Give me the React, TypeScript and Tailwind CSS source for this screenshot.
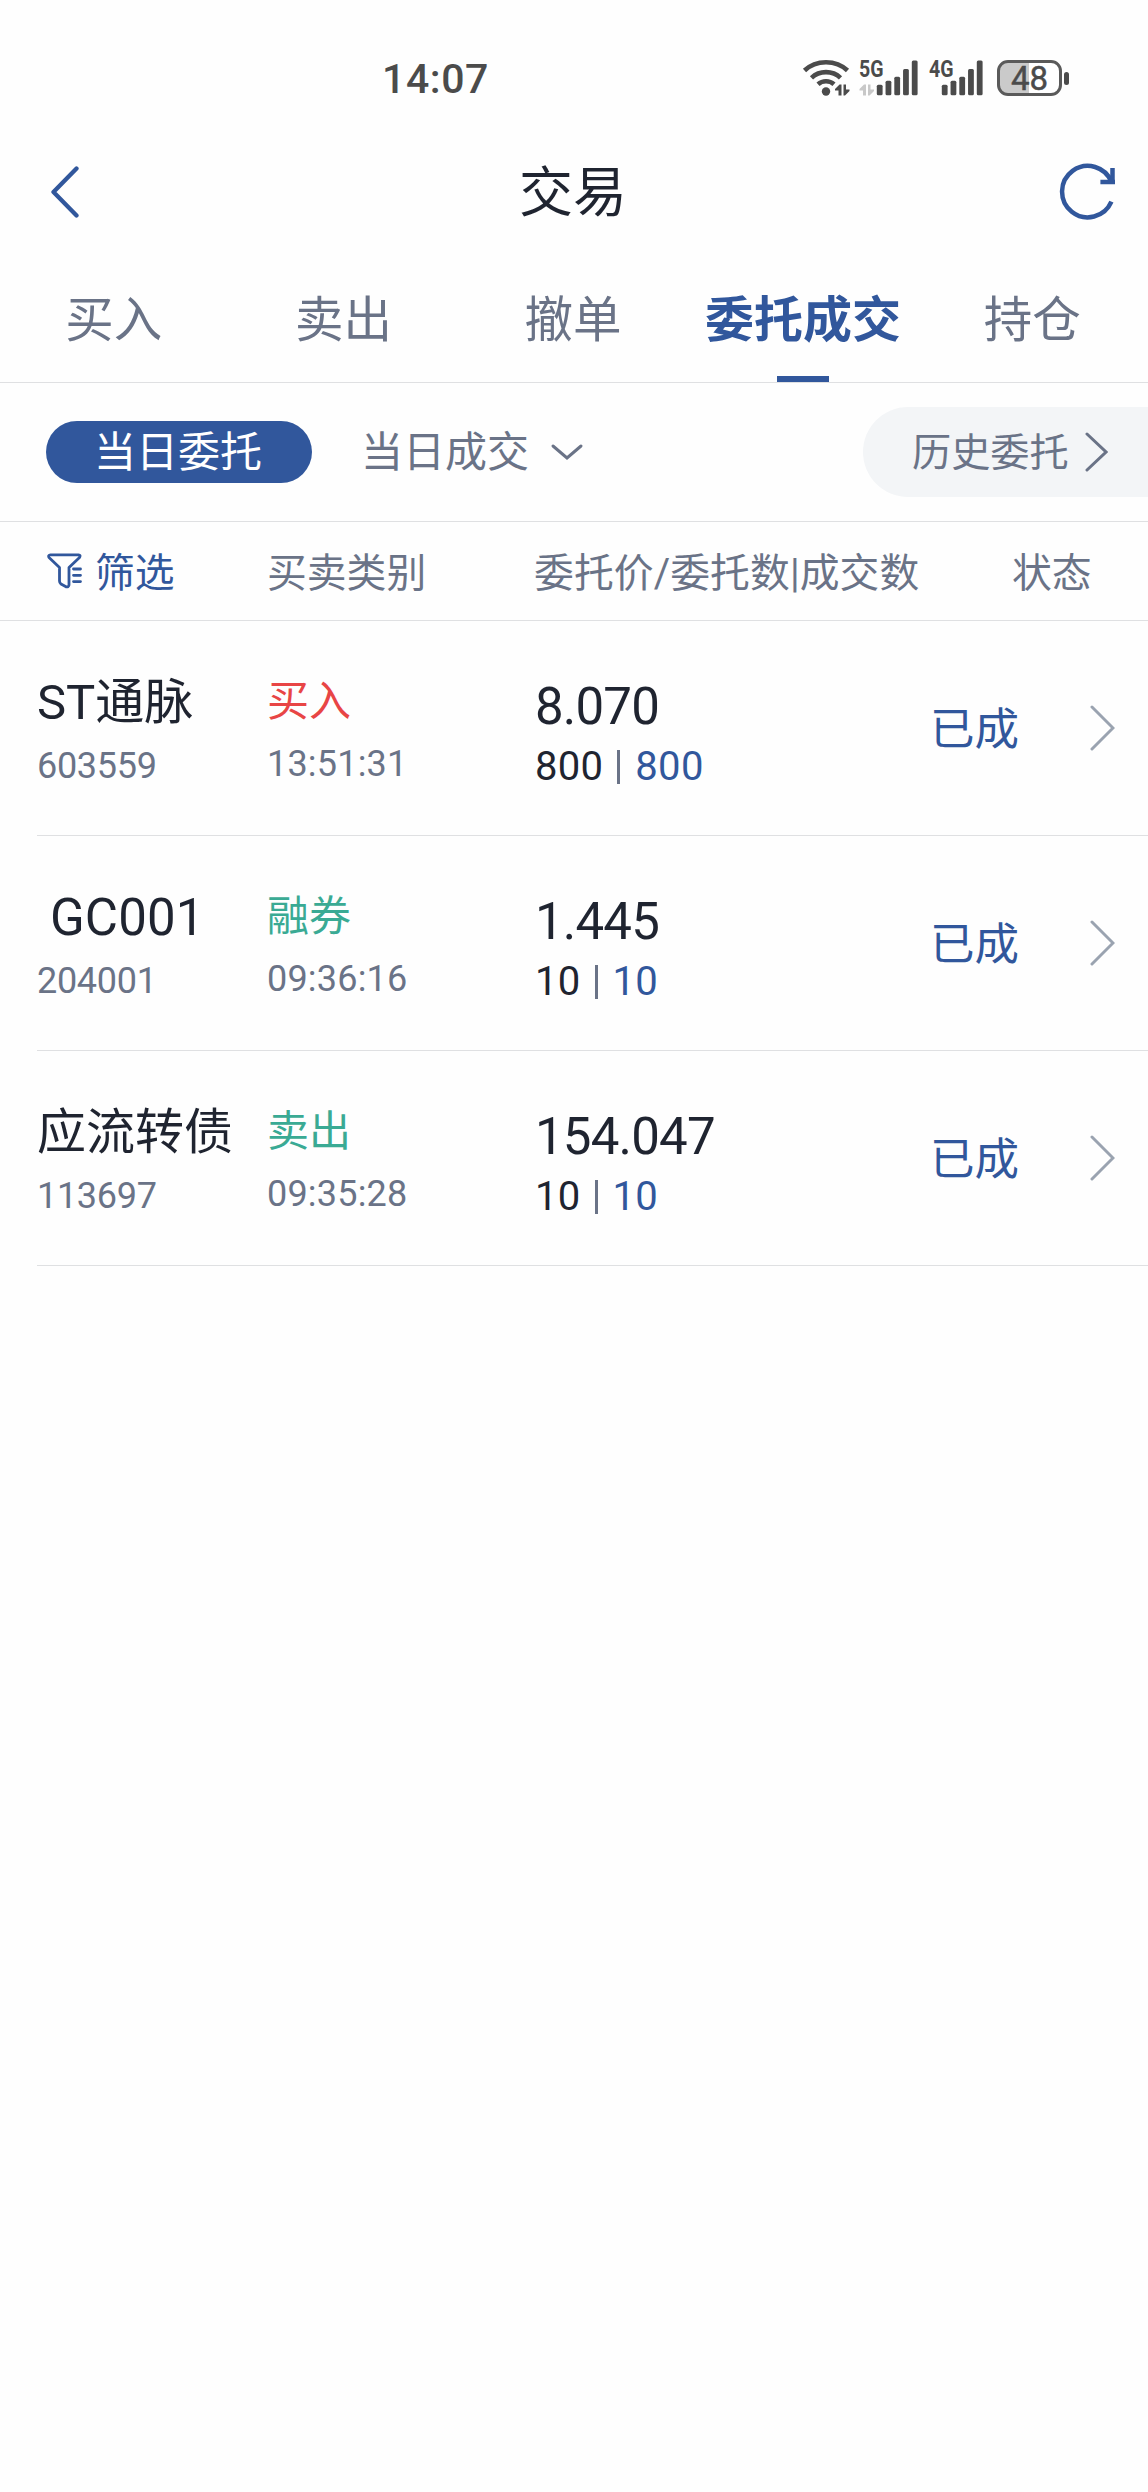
import React from "react";

const tabs = ["买入", "卖出", "撤单", "委托成交", "持仓"];

type Order = {
  name: string;
  indent?: boolean;
  code: string;
  side: string;
  sideClass: string;
  time: string;
  price: string;
  qty: string;
  filled: string;
  status: string;
};

const orders: Order[] = [
  { name: "ST通脉", code: "603559", side: "买入", sideClass: "text-[#e84545]", time: "13:51:31", price: "8.070", qty: "800", filled: "800", status: "已成" },
  { name: "GC001", indent: true, code: "204001", side: "融券", sideClass: "text-[#3aaa94]", time: "09:36:16", price: "1.445", qty: "10", filled: "10", status: "已成" },
  { name: "应流转债", code: "113697", side: "卖出", sideClass: "text-[#3aaa94]", time: "09:35:28", price: "154.047", qty: "10", filled: "10", status: "已成" },
];

function DataArrows({ x, y, fill }: { x: number; y: number; fill: string }) {
  return (
    <g transform={`translate(${x} ${y})`} fill={fill}>
      <path d="M6.5 0V11H3.5V6H0V4.5L4.5 0Z" />
      <path d="M8.5 0H11V5H14.5V6.5L10 11H8.5Z" />
    </g>
  );
}

function Wifi() {
  return (
    <svg width="48" height="40" viewBox="0 0 48 40" className="shrink-0">
      <g fill="none" stroke="#4b4b4b" strokeWidth="4.6">
        <path d="M2.5 12.5C14 1.400 34 1.400 45.5 12.5" />
        <path d="M9.5 19.8C17.5 12.2 30.5 12.2 38.5 19.8" />
        <path d="M16 26.3C20.5 22.3 27.5 22.3 32 26.3" />
      </g>
      <circle cx="24" cy="33.5" r="4.200" fill="#4b4b4b" />
      <DataArrows x={33} y={26.5} fill="#4b4b4b" />
    </svg>
  );
}

function Signal({ label, idle, first }: { label: string; idle?: boolean; first: number }) {
  const tops = [26.7, 22.7, 18.7, 11, 2.5];
  return (
    <svg width="64" height="56" viewBox="-2 -8 64 56" className="shrink-0">
      <text x="0" y="19.300" textLength="24.500" lengthAdjust="spacingAndGlyphs" fontSize="23.500" fontWeight="700" fill="#4b4b4b" fontFamily="Roboto, sans-serif">
        {label}
      </text>
      {idle && <DataArrows x={0.5} y={26.5} fill="#c8c8c8" />}
      {tops.map((top, i) => (
        <rect key={top} x={first + i * 8.75} y={top} width="5.800" height={37.3 - top} rx="1.500" fill="#4b4b4b" />
      ))}
    </svg>
  );
}

function Battery() {
  return (
    <div className="flex items-center gap-[2px]">
      <div className="flex h-9 w-[65px] items-center justify-center rounded-[11px] border-[3px] border-[#5a5a5a] bg-[linear-gradient(90deg,#cacaca_48.5%,#ffffff_48.5%)] text-[33px] leading-none text-[#4b4b4b] [-webkit-text-stroke:0.5px_#4b4b4b]">
        48
      </div>
      <div className="h-[13px] w-[5px] rounded-full bg-[#4b4b4b]" />
    </div>
  );
}

function Chevron({ className, width = 24, height = 46, stroke }: { className?: string; width?: number; height?: number; stroke: number }) {
  return (
    <svg width={width} height={height} viewBox={`0 0 ${width} ${height}`} className={className} fill="none" stroke="currentColor" strokeWidth={stroke} strokeLinecap="round">
      <path d={`M2 2L${width - 2} ${height / 2}L2 ${height - 2}`} />
    </svg>
  );
}

export default function App() {
  return (
    <div className="min-h-[2492px] w-[1148px] overflow-hidden bg-[#fefefe] font-[Roboto,'Noto_Sans_CJK_SC',sans-serif] text-[#1f2430]">
      <div className="flex h-[130px] items-center pt-[26px] pr-[79px] pl-[382px]">
        <span className="pt-[2px] text-[41px] leading-none font-medium tracking-[0.6px] text-[#4b4b4b]">14:07</span>
        <div className="ml-auto flex items-center">
          <Wifi />
          <div className="ml-[7px]"><Signal label="5G" idle first={17.8} /></div>
          <div className="ml-[6px]"><Signal label="4G" first={12.8} /></div>
          <div className="ml-[6px]"><Battery /></div>
        </div>
      </div>

      <header className="grid h-[124px] grid-cols-[1fr_auto_1fr] items-center pr-[30px] pl-[50px]">
        <svg width="32" height="52" viewBox="0 0 32 52" fill="none" stroke="#31579c" strokeWidth="4.300" strokeLinecap="round" strokeLinejoin="round">
          <path d="M26.500 2.500L3.500 26L26.500 49.500" />
        </svg>
        <h1 className="mr-[22px] pt-[4px] text-[54px] leading-[60px]">交易</h1>
        <svg width="60" height="60" viewBox="0 0 60 60" className="justify-self-end" fill="none" stroke="#31579c" strokeWidth="4.500">
          <path d="M53.400 39.700A25.700 25.700 0 1 1 53.800 20.500" />
          <path d="M42.400 20H57M54.500 6V21.500" />
        </svg>
      </header>

      <nav className="grid h-[129px] grid-cols-5 border-b border-[#dfe0e2]">
        {tabs.map((tab) => {
          const active = tab === "委托成交";
          return (
            <div key={tab} className={active ? "flex flex-col items-center justify-between pr-[1px] text-[49px] font-bold text-[#31579c]" : "flex flex-col items-center pr-[2px] text-[48.5px] text-[#6a7387]"}>
              <span className="pt-[37px] leading-[60px] whitespace-nowrap">{tab}</span>
              {active && <span className="h-[6px] w-[52px] bg-[#31579c]" />}
            </div>
          );
        })}
      </nav>

      <div className="flex h-[139px] items-center border-b border-[#dfe0e2] pl-[46px] text-[42px] text-[#6a7387]">
        <div className="flex h-[62px] w-[266px] items-center justify-center rounded-full bg-[#31579c] pt-[2px] pr-[2px] leading-none text-white">当日委托</div>
        <span className="ml-[49px] pt-[2px] leading-none">当日成交</span>
        <svg width="34" height="20" viewBox="0 0 34 20" className="ml-[21px]" fill="none" stroke="currentColor" strokeWidth="3" strokeLinecap="round">
          <path d="M3 4L17 16L31 4" />
        </svg>
        <div className="ml-auto flex h-[90px] w-[285px] items-center rounded-l-full bg-[#f3f5f7] pl-[49px] text-[39.2px]">
          <span className="pt-[4px] leading-none">历史委托</span>
          <Chevron width={23} height={40} stroke={3} className="ml-[16px]" />
        </div>
      </div>

      <div className="grid h-[99px] grid-cols-[220px_267px_478px_1fr] items-center border-b border-[#dfe0e2] pl-[47px] text-[39.8px] leading-none text-[#6a7387]">
        <div className="flex items-center text-[#31579c]">
          <svg width="36" height="36" viewBox="0 0 36 36" fill="none" stroke="currentColor" strokeWidth="2.800" strokeLinejoin="round" strokeLinecap="round">
            <path d="M3.500 1.800H31.500Q34 2 32.500 4.500L22 14.500V32Q21.500 34.500 19 33.800L14 31Q12.500 30 12.500 28V14.500L2 4.500Q0.800 2 3.500 1.800Z" />
            <path d="M26.500 16H33.500M26.500 22.300H33.500M26.500 28.600H33.500" />
          </svg>
          <span className="ml-[12px] pt-[5px]">筛选</span>
        </div>
        <span className="pt-[5px]">买卖类别</span>
        <span className="pt-[5px] tracking-[0.1px] whitespace-nowrap">委托价/委托数|成交数</span>
        <span className="pt-[5px]">状态</span>
      </div>

      {orders.map((o) => (
        <div key={o.code} className="ml-[37px] grid h-[215px] grid-cols-[230px_268px_395px_160px_1fr] border-b border-[#dfe0e2]">
          <div className="flex flex-col pt-[52px]">
            <span className={o.indent ? "pl-[13px] text-[51px] leading-[60px] whitespace-nowrap tracking-[0.1px]" : "text-[49px] leading-[60px] whitespace-nowrap"}>{o.name}</span>
            <span className="mt-[13px] text-[36px] leading-[40px] tracking-[-0.3px] text-[#6a7387]">{o.code}</span>
          </div>
          <div className="flex flex-col pt-[51px]">
            <span className={`text-[42px] leading-[60px] ${o.sideClass}`}>{o.side}</span>
            <span className="mt-[12px] text-[36px] leading-[40px] tracking-[0.2px] text-[#6a7387]">{o.time}</span>
          </div>
          <div className="flex flex-col pt-[56px]">
            <span className="text-[51px] leading-[60px] tracking-[-0.8px]">{o.price}</span>
            <div className="mt-[8px] flex items-center text-[40px] leading-[44px]">
              <span className="tracking-[0.3px]">{o.qty}</span>
              <span className="mr-[15px] ml-[14px] h-[34px] w-[3px] bg-[#6a7387]" />
              <span className="tracking-[0.3px] text-[#31579c]">{o.filled}</span>
            </div>
          </div>
          <span className="self-center pt-[5px] text-[44.5px] leading-none text-[#31579c]">{o.status}</span>
          <Chevron width={25} height={46} stroke={3} className="self-center text-[#9aa3b0]" />
        </div>
      ))}
    </div>
  );
}
